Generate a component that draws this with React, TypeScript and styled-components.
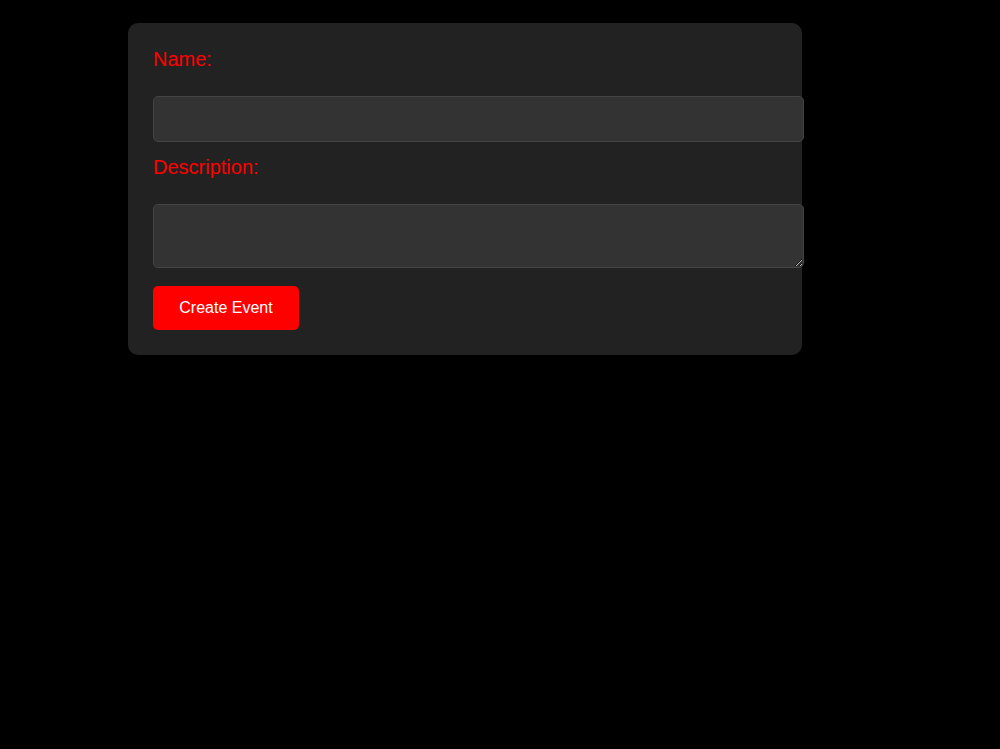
import React, {useState} from 'react';
import styled, {createGlobalStyle} from 'styled-components';

const GlobalStyle = createGlobalStyle`
  html, body {
    margin: 0;
    padding: 0;
    background: #000;
    min-height: 100%;
  }
  body {
    font-family: "Liberation Sans", Arial, sans-serif;
  }
`;

const Page = styled.div`
  min-height: 749px;
  background: #000;
  padding-top: 23px;
  padding-left: 128px;
  box-sizing: border-box;
`;

const Card = styled.form`
  width: 674px;
  box-sizing: border-box;
  padding: 25px;
  background: #222;
  border-radius: 10px;
`;

const Label = styled.label`
  display: block;
  color: #ff0000;
  font-size: 20px;
  line-height: 23px;
  margin-bottom: 25px;
`;

const fieldStyles = `
  display: block;
  width: 651px;
  box-sizing: border-box;
  background: #333;
  border: 1px solid #444;
  border-radius: 5px;
  color: #fff;
  font-family: "Liberation Sans", Arial, sans-serif;
  font-size: 16px;
  padding: 10px;
  outline: none;
`;

const TextInput = styled.input`
  ${fieldStyles}
  height: 46px;
  margin-bottom: 14px;
`;

const TextArea = styled.textarea`
  ${fieldStyles}
  height: 64px;
  margin: 0 0 18px;
`;

const SubmitButton = styled.button`
  display: block;
  width: 146px;
  height: 44px;
  border: none;
  border-radius: 5px;
  background: #ff0000;
  color: #fff;
  font-family: "Liberation Sans", Arial, sans-serif;
  font-size: 16px;
  cursor: pointer;
`;

const App = () => {
  const [name, setName] = useState('');
  const [description, setDescription] = useState('');

  return (
    <>
      <GlobalStyle/>
      <Page>
        <Card onSubmit={(e) => e.preventDefault()}>
          <Label htmlFor="event-name">Name:</Label>
          <TextInput id="event-name"
                     type="text"
                     value={name}
                     onChange={(e) => setName(e.target.value)}/>
          <Label htmlFor="event-description">Description:</Label>
          <TextArea id="event-description"
                    value={description}
                    onChange={(e) => setDescription(e.target.value)}/>
          <SubmitButton type="submit">Create Event</SubmitButton>
        </Card>
      </Page>
    </>
  );
};

export default App;
